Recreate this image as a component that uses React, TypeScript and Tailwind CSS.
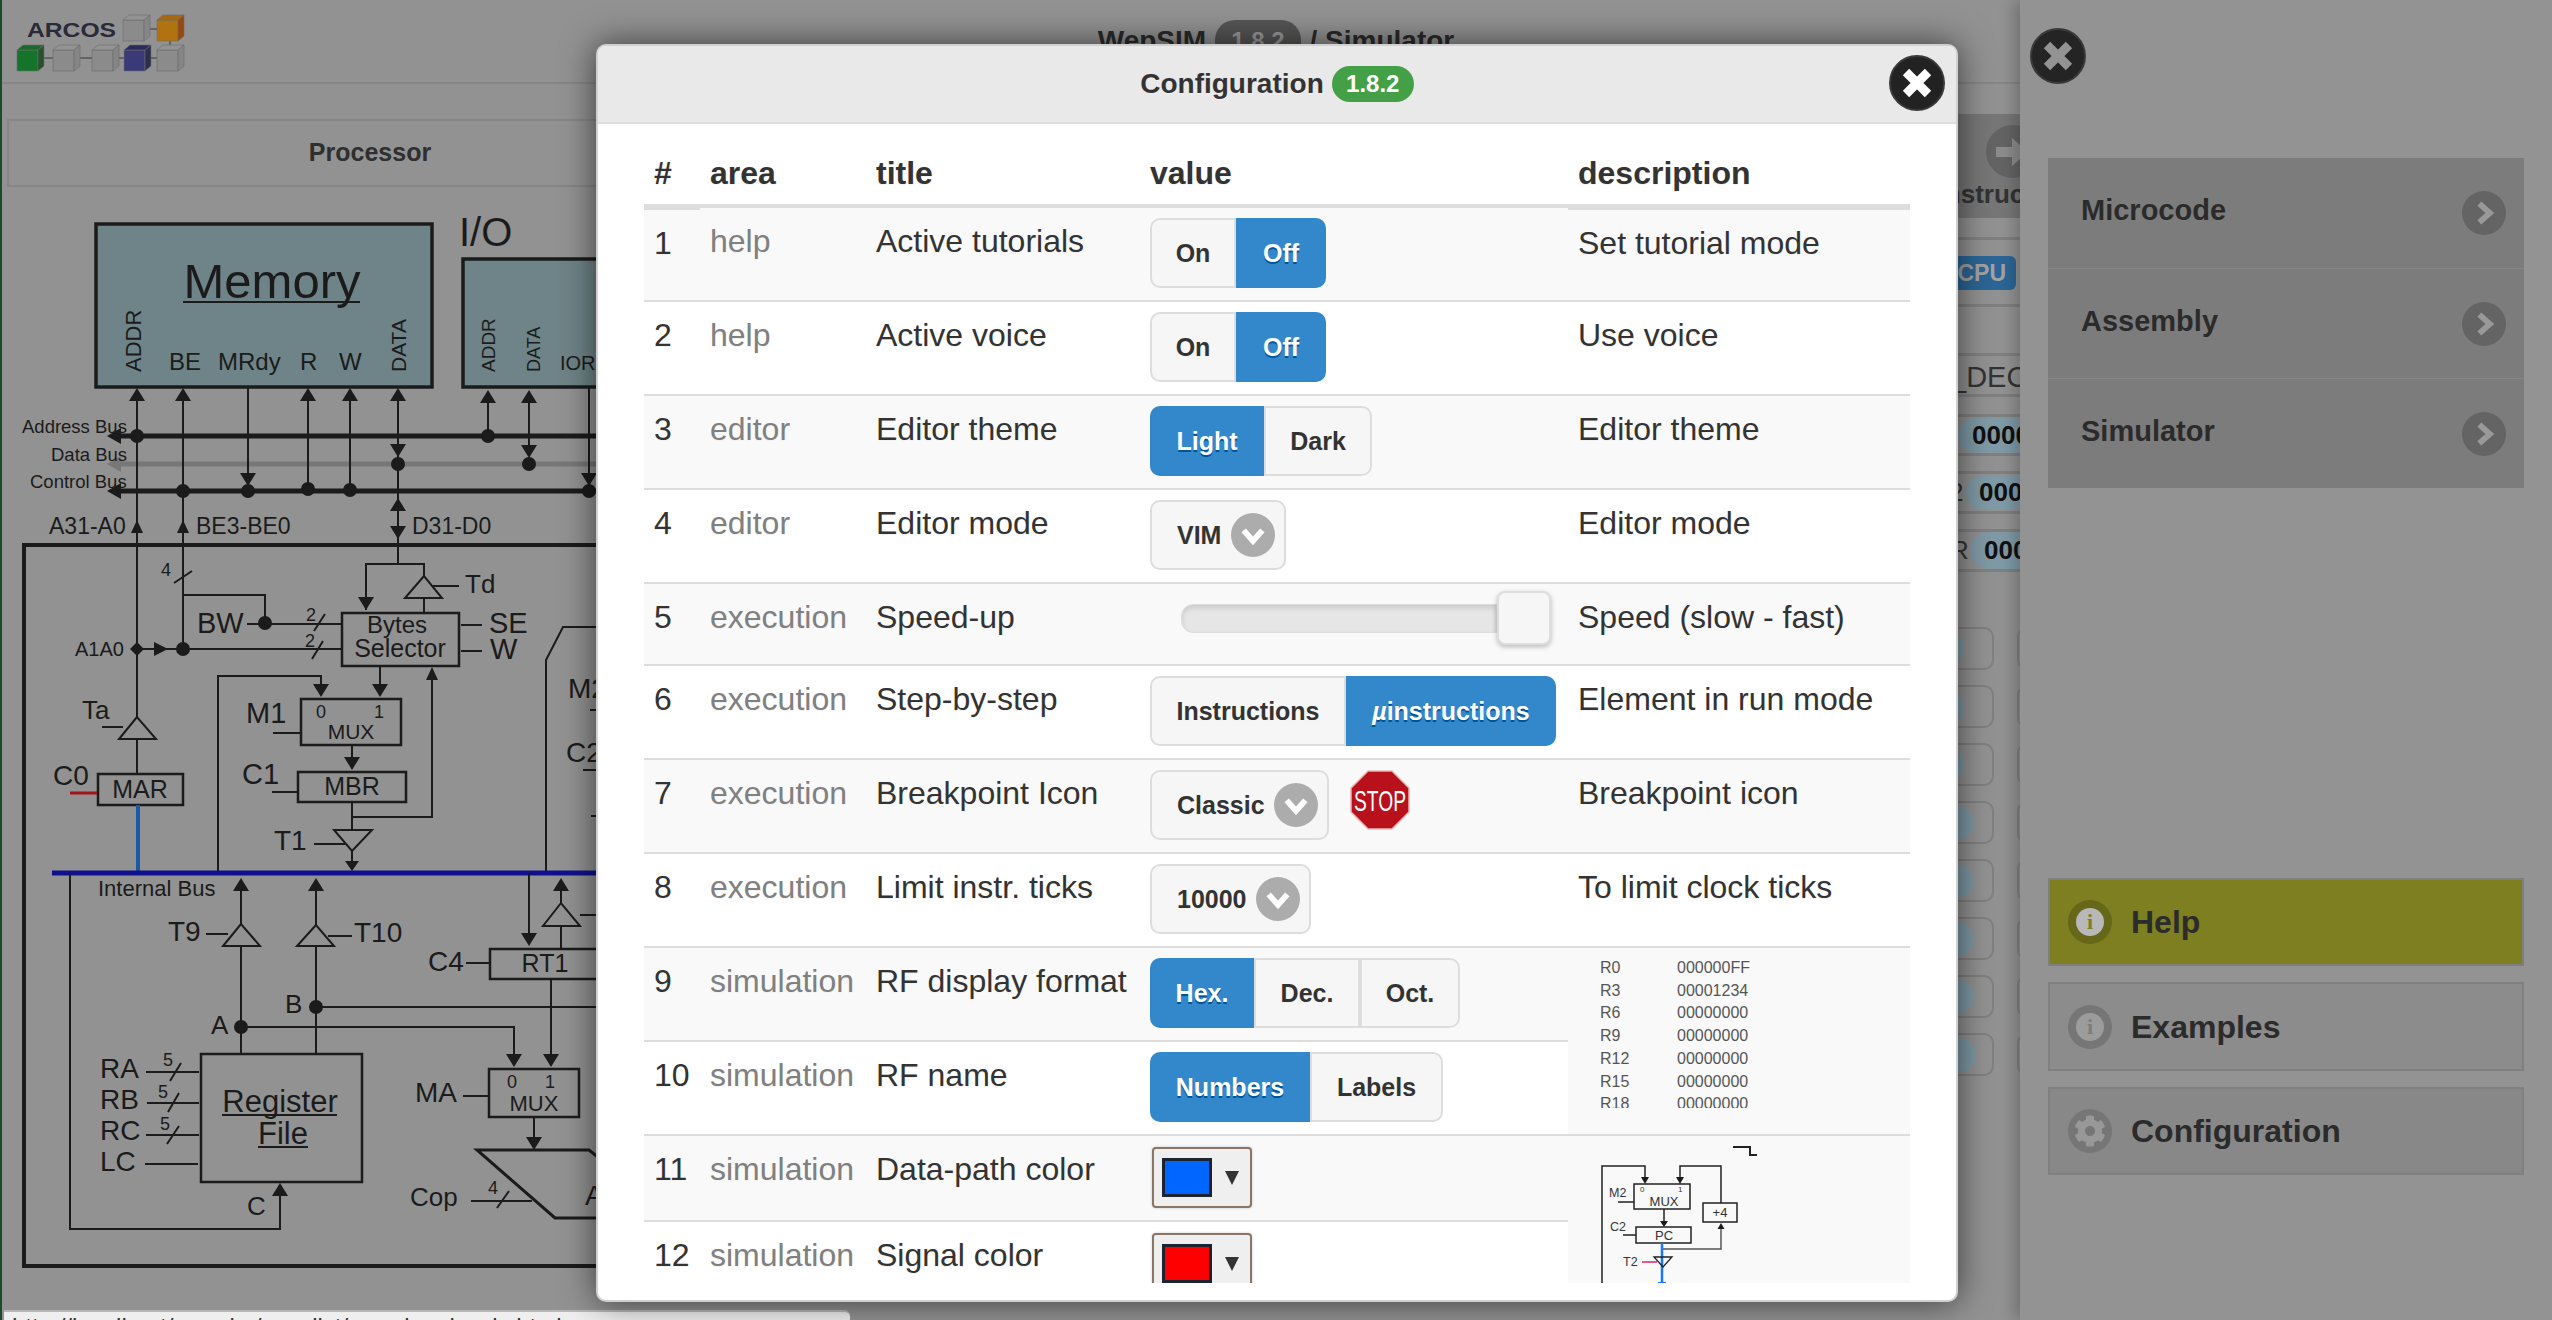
import type { ReactNode } from 'react';
import { FaCog } from 'react-icons/fa';

const ink = '#1b1b1b';

function Ln({ d, w = 2, c = ink }: { d: string; w?: number; c?: string }) {
  return <path d={d} stroke={c} strokeWidth={w} fill="none" />;
}

function Up({ x, y, s = 8, h = 13 }: { x: number; y: number; s?: number; h?: number }) {
  return <polygon points={`${x},${y} ${x - s},${y + h} ${x + s},${y + h}`} fill={ink} />;
}

function Down({ x, y, s = 8, h = 13 }: { x: number; y: number; s?: number; h?: number }) {
  return <polygon points={`${x},${y} ${x - s},${y - h} ${x + s},${y - h}`} fill={ink} />;
}

function Dot({ x, y, r = 7 }: { x: number; y: number; r?: number }) {
  return <circle cx={x} cy={y} r={r} fill={ink} />;
}

function Lbl({ x, y, s, children, mid, fill = ink }: { x: number; y: number; s: number; children: ReactNode; mid?: boolean; fill?: string }) {
  return (
    <text x={x} y={y} fontSize={s} fill={fill} textAnchor={mid ? 'middle' : 'start'}>
      {children}
    </text>
  );
}

function VLbl({ x, y, s, children }: { x: number; y: number; s: number; children: ReactNode }) {
  return (
    <text x={0} y={0} fontSize={s} fill={ink} transform={`translate(${x} ${y}) rotate(-90)`}>
      {children}
    </text>
  );
}

function Cube({ x, y, front, top, side }: { x: number; y: number; front: string; top: string; side: string }) {
  return (
    <g>
      <rect x={x} y={y + 5} width={21} height={21} fill={front} stroke="#6d6d6d" strokeWidth={0.6} />
      <polygon points={`${x},${y + 5} ${x + 6},${y} ${x + 27},${y} ${x + 21},${y + 5}`} fill={top} stroke="#6d6d6d" strokeWidth={0.6} />
      <polygon points={`${x + 21},${y + 5} ${x + 27},${y} ${x + 27},${y + 21} ${x + 21},${y + 26}`} fill={side} stroke="#6d6d6d" strokeWidth={0.6} />
    </g>
  );
}

function Logo() {
  const gray = { front: '#8b8b8b', top: '#939393', side: '#858585' };
  return (
    <svg width={200} height={82} viewBox="0 0 200 82" className="block">
      <text x={27} y={37} fontSize={21} fill="#2a2a3a" textLength={89} lengthAdjust="spacingAndGlyphs">ARCOS</text>
      <path d="M148 29H158M170 41V46M42 58H54M78 58H92M118 58H125M150 58H158" stroke="#555" strokeWidth={1.5} fill="none" />
      <Cube x={123} y={15} {...gray} />
      <Cube x={157} y={15} front="#b0730f" top="#a8690e" side="#98480f" />
      <Cube x={17} y={45} front="#14742a" top="#1b6a2c" side="#29502c" />
      <Cube x={53} y={45} {...gray} />
      <Cube x={92} y={45} {...gray} />
      <Cube x={124} y={45} front="#3a3a78" top="#2a2a5c" side="#2d2d4e" />
      <Cube x={157} y={45} {...gray} />
    </svg>
  );
}

function Datapath() {
  return (
    <svg width={1000} height={1133} viewBox="0 187 1000 1133" className="block">
      {/* memory */}
      <rect x={96} y={224} width={336} height={163} fill="#6f8488" stroke={ink} strokeWidth={3.5} />
      <Lbl x={272} y={298} s={49} mid>Memory</Lbl>
      <Ln d="M183 302H360" />
      <VLbl x={141} y={372} s={22}>ADDR</VLbl>
      <Lbl x={169} y={370} s={24}>BE</Lbl>
      <Lbl x={218} y={370} s={24}>MRdy</Lbl>
      <Lbl x={300} y={370} s={24}>R</Lbl>
      <Lbl x={339} y={370} s={24}>W</Lbl>
      <VLbl x={406} y={372} s={21}>DATA</VLbl>

      {/* i/o */}
      <Lbl x={459} y={246} s={40}>I/O</Lbl>
      <rect x={463} y={259} width={300} height={128} fill="#6f8488" stroke={ink} strokeWidth={3.5} />
      <VLbl x={495} y={372} s={19}>ADDR</VLbl>
      <VLbl x={540} y={372} s={18}>DATA</VLbl>
      <Lbl x={560} y={370} s={20}>IOR</Lbl>

      {/* buses */}
      <Ln d="M118 436H700" w={5} />
      <Ln d="M118 464H700" w={5} c="#777777" />
      <Ln d="M118 491H700" w={5} />
      <polygon points="107,436 121,428 121,444" fill={ink} />
      <polygon points="107,464 121,456 121,472" fill="#777777" />
      <polygon points="107,491 121,483 121,499" fill={ink} />
      <Lbl x={22} y={433} s={18.5}>Address Bus</Lbl>
      <Lbl x={51} y={461} s={18.5}>Data Bus</Lbl>
      <Lbl x={30} y={488} s={18.5}>Control Bus</Lbl>

      <Ln d="M137 400V717M183 400V649M248 388V480M308 400V489M350 400V490M398 400V564M488 400V436M529 400V452M589 387V480" />
      <Up x={137} y={388} /><Up x={183} y={388} /><Up x={308} y={388} /><Up x={350} y={388} /><Up x={398} y={388} />
      <Up x={488} y={390} /><Up x={529} y={390} />
      <Down x={248} y={486} /><Down x={398} y={457} /><Down x={529} y={458} /><Down x={589} y={486} />
      <Dot x={137} y={436} /><Dot x={488} y={436} /><Dot x={398} y={464} /><Dot x={529} y={464} />
      <Dot x={183} y={491} /><Dot x={248} y={491} /><Dot x={308} y={489} /><Dot x={350} y={490} /><Dot x={589} y={491} />

      <Lbl x={49} y={534} s={23}>A31-A0</Lbl>
      <Lbl x={196} y={534} s={23}>BE3-BE0</Lbl>
      <Lbl x={412} y={534} s={23}>D31-D0</Lbl>
      <Up x={137} y={520} s={6} /><Up x={183} y={520} s={6} />
      <Up x={398} y={498} /><Down x={398} y={539} />

      {/* cpu frame */}
      <rect x={24} y={545} width={900} height={721} fill="none" stroke={ink} strokeWidth={4} />

      <Lbl x={161} y={576} s={18}>4</Lbl>
      <Ln d="M174 583L192 571" />
      <Ln d="M183 595H265V623M247 624H341M137 649H341" />
      <Dot x={265} y={623} />
      <Dot x={183} y={649} />
      <polygon points="137,642 144,649 137,656 130,649" fill={ink} />
      <polygon points="168,649 154,642 154,656" fill={ink} />
      <Lbl x={197} y={633} s={29}>BW</Lbl>
      <Lbl x={75} y={656} s={20}>A1A0</Lbl>
      <Lbl x={306} y={621} s={18}>2</Lbl>
      <Ln d="M314 631L325 614M312 659L323 641" />
      <Lbl x={305} y={647} s={18}>2</Lbl>

      <rect x={342} y={613} width={117} height={53} fill="none" stroke={ink} strokeWidth={2.5} />
      <Lbl x={397} y={633} s={24} mid>Bytes</Lbl>
      <Lbl x={400} y={657} s={25} mid>Selector</Lbl>
      <Ln d="M366 610V564H424V576M424 598V612M433 586H459M461 625H482M461 651H482" />
      <Down x={366} y={610} />
      <polygon points="424,576 405,598 442,598" fill="none" stroke={ink} strokeWidth={2} />
      <Lbl x={465} y={593} s={26}>Td</Lbl>
      <Lbl x={489} y={633} s={29}>SE</Lbl>
      <Lbl x={490} y={659} s={29}>W</Lbl>
      <Ln d="M546 873V660L563 627H700" />

      <Lbl x={568} y={698} s={28}>M2</Lbl>
      <Lbl x={566} y={762} s={28}>C2</Lbl>
      <Ln d="M590 710H610M583 770H610M591 816H610" />

      {/* mar */}
      <polygon points="137,717 119,739 156,739" fill="none" stroke={ink} strokeWidth={2} />
      <Ln d="M102 727H123M137 739V774" />
      <Lbl x={82} y={719} s={26}>Ta</Lbl>
      <rect x={98} y={774} width={85} height={31} fill="none" stroke={ink} strokeWidth={2.5} />
      <Lbl x={140} y={798} s={25} mid>MAR</Lbl>
      <Lbl x={53} y={785} s={28}>C0</Lbl>
      <Ln d="M70 793H97" w={3} c="#a2141c" />
      <Ln d="M138 805V873" w={4} c="#1859a8" />

      {/* mbr */}
      <Ln d="M218 873V676H321V690M380 666V690M432 680V817H352" />
      <Down x={321} y={697} /><Down x={380} y={697} />
      <Up x={432} y={667} s={6} />
      <Lbl x={246} y={723} s={29}>M1</Lbl>
      <Ln d="M273 733H300M272 792H297" />
      <rect x={301} y={699} width={100} height={46} fill="none" stroke={ink} strokeWidth={2.5} />
      <Lbl x={321} y={718} s={18} mid>0</Lbl>
      <Lbl x={379} y={718} s={18} mid>1</Lbl>
      <Lbl x={351} y={739} s={21} mid>MUX</Lbl>
      <Ln d="M352 745V760" />
      <Down x={352} y={770} />
      <Lbl x={242} y={784} s={29}>C1</Lbl>
      <rect x={298} y={772} width={108} height={30} fill="none" stroke={ink} strokeWidth={2.5} />
      <Lbl x={352} y={795} s={25} mid>MBR</Lbl>
      <Ln d="M352 802V830M314 844H345M352 851V862" />
      <polygon points="334,830 372,830 352,851" fill="none" stroke={ink} strokeWidth={2} />
      <Lbl x={274} y={850} s={28}>T1</Lbl>
      <Down x={352} y={871} s={7} h={10} />

      {/* internal bus */}
      <Ln d="M52 873H700" w={5} c="#10108f" />
      <Lbl x={98} y={896} s={22}>Internal Bus</Lbl>
      <Ln d="M70 873V1229H280V1195" />
      <Up x={280} y={1183} />
      <Lbl x={247} y={1215} s={26}>C</Lbl>

      {/* t9 t10 */}
      <Ln d="M241 924V890M316 925V890M206 934H228M328 936H352M241 946V1053M316 946V1053" />
      <Up x={241} y={878} /><Up x={316} y={878} />
      <polygon points="241,924 223,946 260,946" fill="none" stroke={ink} strokeWidth={2} />
      <polygon points="316,925 297,946 334,946" fill="none" stroke={ink} strokeWidth={2} />
      <Lbl x={168} y={941} s={28}>T9</Lbl>
      <Lbl x={354} y={942} s={28}>T10</Lbl>
      <Dot x={316} y={1007} /><Dot x={241} y={1027} />
      <Lbl x={285} y={1013} s={26}>B</Lbl>
      <Lbl x={211} y={1034} s={26}>A</Lbl>
      <Ln d="M316 1007H700M241 1027H514V1055" />
      <Down x={514} y={1067} />

      {/* register file */}
      <rect x={201} y={1054} width={161} height={128} fill="none" stroke={ink} strokeWidth={2.5} />
      <Lbl x={280} y={1112} s={31} mid>Register</Lbl>
      <Lbl x={283} y={1144} s={31} mid>File</Lbl>
      <Ln d="M222 1115H337M258 1147H308" />
      <Lbl x={100} y={1078} s={28}>RA</Lbl>
      <Lbl x={100} y={1109} s={28}>RB</Lbl>
      <Lbl x={100} y={1140} s={28}>RC</Lbl>
      <Lbl x={100} y={1171} s={28}>LC</Lbl>
      <Ln d="M146 1072H199M147 1103H199M146 1135H199M145 1164H198" />
      <Lbl x={163} y={1066} s={18}>5</Lbl>
      <Lbl x={158} y={1098} s={18}>5</Lbl>
      <Lbl x={160} y={1130} s={18}>5</Lbl>
      <Ln d="M170 1081L181 1063M168 1112L179 1093M167 1144L179 1126" />

      {/* rt1 */}
      <Ln d="M529 873V935M561 903V890M561 926V949M580 915H610" />
      <Down x={529} y={946} />
      <Up x={561} y={878} />
      <polygon points="561,903 543,926 580,926" fill="none" stroke={ink} strokeWidth={2} />
      <rect x={490} y={949} width={150} height={30} fill="none" stroke={ink} strokeWidth={2.5} />
      <Lbl x={545} y={972} s={25} mid>RT1</Lbl>
      <Lbl x={428} y={971} s={28}>C4</Lbl>
      <Ln d="M466 963H490M551 979V1055" />
      <Down x={551} y={1067} />

      {/* mux a */}
      <rect x={489} y={1069} width={90} height={48} fill="none" stroke={ink} strokeWidth={2.5} />
      <Lbl x={512} y={1088} s={18} mid>0</Lbl>
      <Lbl x={550} y={1088} s={18} mid>1</Lbl>
      <Lbl x={534} y={1111} s={22} mid>MUX</Lbl>
      <Lbl x={415} y={1102} s={28}>MA</Lbl>
      <Ln d="M463 1096H489M534 1117V1140" />
      <Down x={534} y={1150} />

      {/* alu */}
      <Ln d="M477 1150H589L640 1190V1218H555Z" w={3} />
      <Lbl x={585} y={1205} s={28}>A</Lbl>
      <Lbl x={410} y={1206} s={26}>Cop</Lbl>
      <Ln d="M471 1201H532M497 1208L509 1191" />
      <Lbl x={488} y={1194} s={18}>4</Lbl>
    </svg>
  );
}

function MiniPath() {
  const k = '#222222';
  return (
    <svg width={320} height={148} viewBox="1568 1136 320 148" className="block [text-shadow:none]">
      <Ln d="M1733 1147H1750V1155H1757" c={k} />
      <Ln d="M1602 1284V1166H1645V1178" c={k} w={1.5} />
      <Ln d="M1721 1203V1166H1680V1178" c={k} w={1.5} />
      <Down x={1645} y={1184} s={4} h={7} />
      <Down x={1680} y={1184} s={4} h={7} />
      <rect x={1634} y={1184} width={56} height={25} fill="none" stroke={k} strokeWidth={1.5} />
      <Lbl x={1609} y={1197} s={12.5} fill="#333">M2</Lbl>
      <Ln d="M1618 1202H1634M1623 1235H1636" c={k} w={1.5} />
      <Lbl x={1640} y={1192} s={8} fill="#333">0</Lbl>
      <Lbl x={1678} y={1192} s={8} fill="#333">1</Lbl>
      <Lbl x={1664} y={1206} s={13} mid fill="#333">MUX</Lbl>
      <rect x={1703} y={1203} width={34} height={19} fill="none" stroke={k} strokeWidth={1.5} />
      <Lbl x={1720} y={1217} s={13} mid fill="#333">+4</Lbl>
      <Ln d="M1664 1209V1222" c={k} w={1.5} />
      <Down x={1664} y={1227} s={4} h={6} />
      <rect x={1636} y={1227} width={55} height={16} fill="none" stroke={k} strokeWidth={1.5} />
      <Lbl x={1664} y={1240} s={13} mid fill="#333">PC</Lbl>
      <Lbl x={1610} y={1231} s={12.5} fill="#333">C2</Lbl>
      <Ln d="M1662 1249H1721V1228" c="#555" w={1.5} />
      <Up x={1721} y={1223} s={3.5} h={6} />
      <Ln d="M1662 1243V1283" c="#1976ff" w={2.5} />
      <Ln d="M1658 1283H1666" c="#1976ff" w={2} />
      <polygon points="1654,1257 1672,1257 1663,1267" fill="none" stroke={k} strokeWidth={1.3} />
      <Lbl x={1623} y={1266} s={12.5} fill="#333">T2</Lbl>
      <Ln d="M1642 1262H1657" c="#e0206a" w={1.5} />
    </svg>
  );
}

type SegOption = { label: ReactNode; w: string; on?: boolean; round?: string };

function Seg({ options }: { options: SegOption[] }) {
  return (
    <div className="flex">
      {options.map((o, i) => (
        <div
          key={i}
          className={`flex h-[70px] items-center justify-center border-2 text-[25px] font-bold ${o.w} ${o.round ?? ''} ${
            o.on
              ? 'border-[#3388cc] bg-[#3388cc] text-white [text-shadow:0_2px_0_#005599]'
              : 'border-[#dddddd] bg-[#f6f6f6] text-[#333333]'
          }`}
        >
          {o.label}
        </div>
      ))}
    </div>
  );
}

function Chevron({ dir, bg, stroke, size = 44 }: { dir: 'down' | 'right'; bg: string; stroke: string; size?: number }) {
  return (
    <div className={`flex shrink-0 items-center justify-center rounded-full ${bg}`} style={{ width: size, height: size }}>
      <svg width={28} height={28} viewBox="0 0 24 24">
        <path d={dir === 'down' ? 'M4 8L12 17L20 8' : 'M8 4L17 12L8 20'} fill="none" stroke={stroke} strokeWidth={5} />
      </svg>
    </div>
  );
}

function Select({ label, w }: { label: string; w: string }) {
  return (
    <div className={`flex h-[70px] items-center justify-between rounded-[10px] border-2 border-[#dddddd] bg-[#f6f6f6] pl-[25px] pr-[9px] text-[25px] font-bold text-[#333333] ${w}`}>
      {label}
      <Chevron dir="down" bg="bg-[#acacac]" stroke="#ffffff" />
    </div>
  );
}

function StopSign() {
  return (
    <svg width={60} height={60} viewBox="0 0 60 60" className="block">
      <polygon points="18,1 42,1 59,18 59,42 42,59 18,59 1,42 1,18" fill="#b8111b" stroke="#e6b8b8" strokeWidth={1.5} />
      <text x={30} y={41} fontSize={30} fontWeight={400} fill="#ffffff" textAnchor="middle" textLength={52} lengthAdjust="spacingAndGlyphs" className="[text-shadow:none]">
        STOP
      </text>
    </svg>
  );
}

function ColorPick({ swatch }: { swatch: string }) {
  return (
    <div className="ml-[2px] flex h-[61px] w-[100px] items-center rounded-[4px] border-2 border-[#8b7565] bg-[#efefef] pl-[8px] shadow-[0_0_3px_rgba(0,0,0,0.2)]">
      <div className={`h-[39px] w-[50px] border-[3px] border-[#1b2430] ${swatch}`} />
      <svg width={14} height={14} viewBox="0 0 14 14" className="ml-[13px] block">
        <polygon points="0,0 14,0 7,14" fill="#333333" />
      </svg>
    </div>
  );
}

function Regs() {
  const regs = [
    ['R0', '000000FF'],
    ['R3', '00001234'],
    ['R6', '00000000'],
    ['R9', '00000000'],
    ['R12', '00000000'],
    ['R15', '00000000'],
    ['R18', '00000000'],
  ];
  return (
    <div className="ml-[32px] mt-[9px] h-[151px] overflow-hidden text-[16px] leading-[22.7px] text-[#555555] [text-shadow:none]">
      {regs.map(([r, v]) => (
        <div key={r} className="flex">
          <span className="w-[77px]">{r}</span>
          <span>{v}</span>
        </div>
      ))}
    </div>
  );
}

function Slider() {
  return (
    <div className="ml-[31px] flex h-[54px] items-center">
      <div className="h-[29px] w-[316px] rounded-l-[12px] border border-[#dddddd] bg-[#e6e6e6] shadow-[inset_0_3px_5px_rgba(0,0,0,0.12)]" />
      <div className="h-[54px] w-[54px] rounded-[8px] border-2 border-[#dddddd] bg-[#f6f6f6] shadow-[0_2px_5px_rgba(0,0,0,0.25)]" />
    </div>
  );
}

const l = 'rounded-l-[10px]';
const r = 'rounded-r-[10px]';

type Row = { n: number; area: string; title: string; desc?: ReactNode; span?: number; noDesc?: boolean; value: ReactNode; valueCls?: string };

const rows: Row[] = [
  { n: 1, area: 'help', title: 'Active tutorials', desc: 'Set tutorial mode', value: <Seg options={[{ label: 'On', w: 'w-[86px]', round: l }, { label: 'Off', w: 'w-[90px]', on: true, round: r }]} /> },
  { n: 2, area: 'help', title: 'Active voice', desc: 'Use voice', value: <Seg options={[{ label: 'On', w: 'w-[86px]', round: l }, { label: 'Off', w: 'w-[90px]', on: true, round: r }]} /> },
  { n: 3, area: 'editor', title: 'Editor theme', desc: 'Editor theme', value: <Seg options={[{ label: 'Light', w: 'w-[114px]', on: true, round: l }, { label: 'Dark', w: 'w-[108px]', round: r }]} /> },
  { n: 4, area: 'editor', title: 'Editor mode', desc: 'Editor mode', value: <Select label="VIM" w="w-[136px]" /> },
  { n: 5, area: 'execution', title: 'Speed-up', desc: 'Speed (slow - fast)', value: <Slider />, valueCls: 'pt-[7px] pb-[19px]' },
  { n: 6, area: 'execution', title: 'Step-by-step', desc: 'Element in run mode', value: <Seg options={[{ label: 'Instructions', w: 'w-[196px]', round: l }, { label: <span><i>µ</i>instructions</span>, w: 'w-[210px]', on: true, round: r }]} /> },
  {
    n: 7,
    area: 'execution',
    title: 'Breakpoint Icon',
    desc: 'Breakpoint icon',
    value: (
      <div className="flex items-start gap-[21px]">
        <Select label="Classic" w="w-[179px]" />
        <StopSign />
      </div>
    ),
  },
  { n: 8, area: 'execution', title: 'Limit instr. ticks', desc: 'To limit clock ticks', value: <Select label="10000" w="w-[161px]" /> },
  { n: 9, area: 'simulation', title: 'RF display format', desc: <Regs />, span: 2, value: <Seg options={[{ label: 'Hex.', w: 'w-[104px]', on: true, round: l }, { label: 'Dec.', w: 'w-[106px]' }, { label: 'Oct.', w: 'w-[100px]', round: r }]} /> },
  { n: 10, area: 'simulation', title: 'RF name', noDesc: true, value: <Seg options={[{ label: 'Numbers', w: 'w-[160px]', on: true, round: l }, { label: 'Labels', w: 'w-[133px]', round: r }]} /> },
  { n: 11, area: 'simulation', title: 'Data-path color', desc: <MiniPath />, span: 2, value: <ColorPick swatch="bg-[#0066ff]" />, valueCls: 'pt-[11px] pb-[12px]' },
  { n: 12, area: 'simulation', title: 'Signal color', noDesc: true, value: <ColorPick swatch="bg-[#ff0000]" />, valueCls: 'pt-[11px] pb-[12px]' },
];

function ConfigTable() {
  return (
    <table className="w-full table-fixed border-separate border-spacing-0 text-[32px] leading-[36px] text-[#333333]">
      <colgroup>
        <col className="w-[56px]" />
        <col className="w-[166px]" />
        <col className="w-[274px]" />
        <col className="w-[428px]" />
        <col className="w-[342px]" />
      </colgroup>
      <thead>
        <tr className="text-left font-bold">
          {['#', 'area', 'title', 'value', 'description'].map((h) => (
            <th key={h} className="border-b-4 border-[#dddddd] pb-[13px] pl-[10px] pt-[15px] font-bold">
              {h}
            </th>
          ))}
        </tr>
      </thead>
      <tbody>
        {rows.map((row) => {
          const bg = row.n % 2 === 1 ? 'bg-[#f9f9f9]' : 'bg-white';
          const edge = row.n === 1 ? 'border-t-2' : '';
          const plain = typeof row.desc === 'string';
          return (
            <tr key={row.n} className="align-top">
              <td className={`border-b-2 border-[#dddddd] pl-[10px] pt-[15px] ${bg} ${edge}`}>{row.n}</td>
              <td className={`border-b-2 border-[#dddddd] pl-[10px] pt-[15px] text-[#808080] ${bg}`}>{row.area}</td>
              <td className={`whitespace-nowrap border-b-2 border-[#dddddd] pl-[10px] pt-[15px] ${bg}`}>{row.title}</td>
              <td className={`border-b-2 border-[#dddddd] pl-[10px] ${row.valueCls ?? 'pb-[12px] pt-[10px]'} ${bg}`}>{row.value}</td>
              {!row.noDesc && (
                <td rowSpan={row.span} className={`border-b-2 border-[#dddddd] ${plain ? 'pl-[10px] pt-[15px]' : ''} ${bg} ${edge}`}>
                  {row.desc}
                </td>
              )}
            </tr>
          );
        })}
      </tbody>
    </table>
  );
}

function CloseIcon({ cross, disc }: { cross: string; disc: string }) {
  return (
    <div className={`flex h-[56px] w-[56px] items-center justify-center rounded-full border-2 border-[#3a3a3a] ${disc}`}>
      <svg width={32} height={32} viewBox="0 0 32 32">
        <path d="M5 5L27 27M27 5L5 27" stroke={cross} strokeWidth={9} fill="none" />
      </svg>
    </div>
  );
}

function Modal() {
  return (
    <div className="absolute left-[596px] top-[44px] flex h-[1258px] w-[1362px] flex-col overflow-hidden rounded-[10px] border-2 border-[#d0d0d0] bg-white shadow-[0_0_34px_rgba(0,0,0,0.6)] [text-shadow:0_1px_0_#f3f3f3]">
      <div className="relative flex h-[78px] shrink-0 items-center justify-center border-b-2 border-[#dddddd] bg-[#e9e9e9] text-[28px] font-bold text-[#333333]">
        Configuration
        <span className="ml-[8px] flex h-[36px] w-[82px] items-center justify-center rounded-[18px] bg-[#43a047] text-[24px] text-white [text-shadow:none]">1.8.2</span>
        <div className="absolute left-[1291px] top-[9px]">
          <CloseIcon cross="#ffffff" disc="bg-[#222222]" />
        </div>
      </div>
      <div className="px-[46px] pt-[16px]">
        <div className="h-[1143px] overflow-hidden">
          <ConfigTable />
        </div>
      </div>
    </div>
  );
}

function InfoIcon({ ring, inner, dot }: { ring: string; inner: string; dot: string }) {
  return (
    <div className={`flex h-[44px] w-[44px] shrink-0 items-center justify-center rounded-full ${ring}`}>
      <div className={`flex h-[28px] w-[28px] items-center justify-center rounded-full text-[22px] font-bold leading-none [font-family:'Liberation_Serif',serif] ${inner} ${dot}`}>i</div>
    </div>
  );
}

function Panel() {
  return (
    <div className="absolute right-0 top-0 h-[1320px] w-[532px] bg-[#939393] px-[28px] pt-[28px] text-[#2b2b2b] shadow-[-6px_0_14px_rgba(0,0,0,0.22)]">
      <div className="-ml-[18px]">
        <CloseIcon cross="#939393" disc="bg-[#242424]" />
      </div>
      <div className="mt-[74px] bg-[#7c7c7c] text-[29px] font-bold">
        {['Microcode', 'Assembly', 'Simulator'].map((m, i) => (
          <div key={m} className={`flex h-[110px] items-center justify-between pl-[33px] pr-[18px] ${i > 0 ? 'border-t border-[#868686]' : ''}`}>
            <span className="-mt-[4px]">{m}</span>
            <Chevron dir="right" bg="bg-[#646464]" stroke="#999999" />
          </div>
        ))}
      </div>
      <div className="mt-[390px] flex flex-col gap-[16px] text-[32px] font-bold">
        <div className="flex h-[88px] items-center gap-[19px] border-2 border-[#7f7f7f] bg-[#7d7f20] pl-[18px]">
          <InfoIcon ring="bg-[#67671a]" inner="bg-[#b8b8b8]" dot="text-[#7d7f20]" />
          Help
        </div>
        <div className="flex h-[89px] items-center gap-[19px] border-2 border-[#808080] bg-[#8c8c8c] pl-[18px]">
          <InfoIcon ring="bg-[#767676]" inner="bg-[#9c9c9c]" dot="text-[#7c7c7c]" />
          Examples
        </div>
        <div className="flex h-[88px] items-center gap-[19px] border-2 border-[#808080] bg-[#888888] pl-[18px]">
          <div className="flex h-[44px] w-[44px] shrink-0 items-center justify-center rounded-full bg-[#767676]">
            <FaCog size={32} color="#989898" />
          </div>
          Configuration
        </div>
      </div>
    </div>
  );
}

function RightStrip() {
  const pills = [62, 62, 62, 72, 72, 72, 72, 74];
  return (
    <div className="ml-[900px] w-[224px] shrink-0 overflow-hidden text-[#333333]">
      <div className="mt-[30px] flex h-[104px] flex-col items-center bg-[#777777] pt-[11px]">
        <div className="flex h-[53px] w-[53px] items-center justify-center rounded-full bg-[#646464]">
          <svg width={36} height={32} viewBox="0 0 36 32">
            <path d="M2 11H18V2L34 16L18 30V21H2Z" fill="#8c8c8c" />
          </svg>
        </div>
        <span className="text-[26px] font-bold leading-[32px]">Instructions</span>
      </div>
      <div className="mt-[19px] border-b-[3px] border-[#808080]" />
      <div className="ml-[50px] mt-[16px] flex h-[34px] w-[66px] items-center justify-end rounded-[6px] bg-[#2c6696] pr-[10px] text-[23px] font-bold text-[#a3a3a3]">CPU</div>
      <div className="mt-[14px] h-[52px] border-y-[3px] border-[#808080]" />
      <div className="h-[41px] border-b-[3px] border-[#808080] pl-[50px] text-[29px] leading-[42px]">_DEC</div>
      <div className="mt-[17px] flex h-[42px] items-center border-y-[3px] border-[#808080]">
        <div className="ml-[58px] flex h-[35px] w-[130px] items-center rounded-[18px] bg-[#7f9aa6] pl-[14px] text-[26px] font-bold text-[#111111]">0000</div>
      </div>
      <div className="mt-[15px] flex h-[43px] items-center border-y-[3px] border-[#808080] text-[26px]">
        <span className="ml-[49px] w-[17px]">2</span>
        <div className="flex h-[34px] w-[130px] items-center rounded-[17px] bg-[#7f9aa6] pl-[13px] font-bold text-[#111111]">0000</div>
      </div>
      <div className="mt-[15px] flex h-[43px] items-center border-y-[3px] border-[#808080] text-[26px]">
        <span className="ml-[50px] w-[21px]">R</span>
        <div className="flex h-[37px] w-[130px] items-center rounded-[18px] bg-[#7f9aa6] pl-[13px] font-bold text-[#111111]">0000</div>
      </div>
      <div className="mt-[55px] flex flex-col gap-[15px]">
        {pills.map((w, i) => (
          <div key={i} className="flex gap-[23px]">
            <div className="flex h-[43px] w-[94px] items-center rounded-r-[10px] border-2 border-[#808080]">
              <div className="h-[34px] rounded-r-[17px] bg-[#7f9aa6]" style={{ width: w }} />
            </div>
            <div className="h-[43px] w-[60px] rounded-l-[10px] border-2 border-[#808080]" />
          </div>
        ))}
      </div>
    </div>
  );
}

export default function App() {
  return (
    <div className="relative h-[1320px] w-[2552px] overflow-hidden bg-[#929292] [font-family:'Liberation_Sans',Arial,sans-serif]">
      <header className="grid h-[84px] grid-cols-[1fr_auto_1fr] items-center border-b-2 border-[#868686] text-[28px] font-bold text-[#2a2a2a]">
        <Logo />
        <div className="flex items-center gap-[9px]">
          WepSIM
          <span className="rounded-[20px] bg-[#555555] px-[16px] py-[3px] text-[24px] text-[#9a9a9a]">1.8.2</span>
          / Simulator
        </div>
      </header>

      <main className="flex h-[1236px]">
        <div className="w-[1000px] shrink-0">
          <div className="ml-[7px] mt-[35px] flex h-[68px] w-[726px] items-center justify-center border-2 border-[#868686] text-[25px] font-bold text-[#2f2f2f]">
            Processor
          </div>
          <Datapath />
        </div>
        <RightStrip />
      </main>

      <div className="absolute bottom-0 left-[4px] h-[10px] w-[846px] overflow-hidden rounded-tr-[6px] border-t-2 border-[#b8b8b8] bg-[#efefef] pl-[8px] pt-[1px] text-[24px] leading-[28px] text-[#333333]">
        http://localhost/wepsim/ws_dist/wepsim-classic.html
      </div>
      <div className="absolute inset-y-0 left-0 w-[2px] bg-[#1d4a2c]" />

      <Modal />
      <Panel />
    </div>
  );
}
